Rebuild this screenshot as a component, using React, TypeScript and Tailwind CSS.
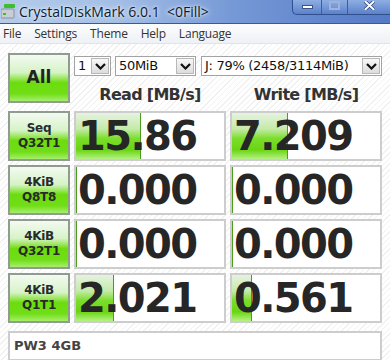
import React from 'react';

const rows = [
  { l1: 'Seq', l2: 'Q32T1', read: '15.86', write: '7.209', rw: 'w-[65px]', ww: 'w-[56px]' },
  { l1: '4KiB', l2: 'Q8T8', read: '0.000', write: '0.000', rw: 'w-0', ww: 'w-0' },
  { l1: '4KiB', l2: 'Q32T1', read: '0.000', write: '0.000', rw: 'w-0', ww: 'w-0' },
  { l1: '4KiB', l2: 'Q1T1', read: '2.021', write: '0.561', rw: 'w-[38px]', ww: 'w-[20px]' },
];

const greenBtn =
  'border-2 border-[#8f9c8f] bg-[linear-gradient(180deg,#f4faf2_0%,#d6f3c6_38%,#9fe864_50%,#6cdc0e_60%,#70de16_84%,#a6ee6c_100%)]';

const Chevron = () => (
  <svg width="11" height="7" viewBox="0 0 11 7">
    <path d="M1 1 L5.5 5.5 L10 1" fill="none" stroke="#111" strokeWidth="2.2" />
  </svg>
);

const Select = ({ w, text }: { w: string; text: string }) => (
  <div className={`${w} h-[20px] bg-white border border-[#a3a3a3] flex items-center`}>
    <span className="flex-1 pl-[3px] text-[13px] tracking-[-0.3px] text-[#111] whitespace-nowrap overflow-hidden">{text}</span>
    <div className="w-[18px] h-[16px] mr-[1px] border border-[#b8b8b8] bg-[linear-gradient(180deg,#f8f8f8,#dcdcdc)] flex items-center justify-center">
      <Chevron />
    </div>
  </div>
);

const Cell = ({ value, bar }: { value: string; bar: string }) => (
  <div className="relative w-[152px] h-[50px] bg-white border-2 border-[#cdcdcd] flex items-center overflow-hidden">
    <div className={`absolute left-0 top-0 bottom-0 ${bar} border-r border-[#4a9e1c] bg-[linear-gradient(180deg,#e6f2e0_0%,#c4eaa8_35%,#7cde2c_55%,#6ad412_80%,#b4f284_100%)]`} />
    <span className="relative pl-[2px] text-[40px] leading-none font-bold tracking-[-1.6px] text-[#262626]">{value}</span>
  </div>
);

export default function App() {
  return (
    <div className="w-[390px] h-[360px] overflow-hidden bg-[repeating-linear-gradient(135deg,#ffffff_0px,#ffffff_3px,#f1f1f1_3px,#f1f1f1_4px)] font-['DejaVu_Sans',sans-serif]">
      {/* title bar */}
      <div className="h-[24px] flex border-b border-[#3a5a94] bg-[linear-gradient(90deg,#b4cbea_0%,#a3bee6_30%,#7598d6_60%,#5479c6_100%)]">
        <div className="flex items-center gap-[4px] h-[22px] pl-[1px]">
          <svg width="14" height="16" viewBox="0 0 14 16">
            <rect x="3" y="1" width="11" height="4" rx="1" fill="#3bbf2a" />
            <rect x="0" y="6" width="13" height="9" rx="1" fill="#c9ced2" stroke="#7d868c" strokeWidth="0.8" />
            <rect x="2" y="10" width="3" height="2" fill="#3bbf2a" />
          </svg>
          <span className="font-['Open_Sans',sans-serif] text-[14px] text-[#0e1a2e] whitespace-pre [text-shadow:0_0_6px_#e4eefa,0_0_3px_#ffffff]">
            CrystalDiskMark 6.0.1  &lt;0Fill&gt;
          </span>
        </div>
        <div className="ml-auto flex h-[15px] border-l border-b border-[#2f4f8d] rounded-bl-[5px] overflow-hidden bg-[linear-gradient(180deg,#8eaee2,#5c81cb)]">
          <div className="w-[29px] flex items-center justify-center border-r border-[#3d5e9c]">
            <div className="w-[11px] h-[4px] bg-white border border-[#3a5485]" />
          </div>
          <div className="w-[26px] flex items-center justify-center border-r border-[#3d5e9c]">
            <div className="w-[11px] h-[9px] border-2 border-[#9db3dc] -mt-[3px]" />
          </div>
          <div className="w-[42px] flex items-start justify-center pt-[1px]">
            <svg width="11" height="9" viewBox="0 0 11 9">
              <path d="M1.5 0.8 L9.5 8.2 M9.5 0.8 L1.5 8.2" stroke="#2a4476" strokeWidth="3.4" strokeLinecap="square" />
              <path d="M1.5 0.8 L9.5 8.2 M9.5 0.8 L1.5 8.2" stroke="#ffffff" strokeWidth="2" strokeLinecap="square" />
            </svg>
          </div>
        </div>
      </div>
      {/* menu bar */}
      <div className="h-[20px] flex items-center gap-[13px] pl-[3px] border-b border-[#dfe3ea] bg-[linear-gradient(180deg,#fbfcfd,#eef1f5)] font-['Open_Sans',sans-serif] text-[12px] tracking-[-0.2px] text-[#333]">
        <span>File</span>
        <span>Settings</span>
        <span>Theme</span>
        <span>Help</span>
        <span>Language</span>
      </div>
      {/* content */}
      <div className="pl-[8px] pt-[9px] flex flex-col gap-[4px]">
        <div className="flex gap-[4px]">
          <div className={`w-[62px] h-[50px] ${greenBtn} flex items-center justify-center text-[17px] font-bold text-[#222]`}>
            All
          </div>
          <div className="flex flex-col">
            <div className="flex mt-[3px]">
              <Select w="w-[37px]" text="1" />
              <div className="w-[4px]" />
              <Select w="w-[81px]" text="50MiB" />
              <div className="w-[5px]" />
              <Select w="w-[181px]" text="J: 79% (2458/3114MiB)" />
            </div>
            <div className="flex gap-[4px] mt-[7px]">
              <div className="w-[152px] text-center text-[16px] font-bold tracking-[-0.7px] text-[#333]">Read [MB/s]</div>
              <div className="w-[152px] text-center text-[16px] font-bold tracking-[-0.7px] text-[#333]">Write [MB/s]</div>
            </div>
          </div>
        </div>
        {rows.map((r, i) => (
          <div key={i} className="flex gap-[4px]">
            <div className={`w-[62px] h-[50px] ${greenBtn} flex flex-col items-center justify-center text-[12px] leading-[15px] font-bold tracking-[-0.3px] text-[#2a2a2a]`}>
              <span>{r.l1}</span>
              <span>{r.l2}</span>
            </div>
            <Cell value={r.read} bar={r.rw} />
            <Cell value={r.write} bar={r.ww} />
          </div>
        ))}
        <div className="mt-[4px] w-[374px] h-[30px] bg-white border-2 border-[#cdcdcd] flex items-center pl-[4px] text-[13px] font-bold text-[#444]">
          PW3 4GB
        </div>
      </div>
    </div>
  );
}
